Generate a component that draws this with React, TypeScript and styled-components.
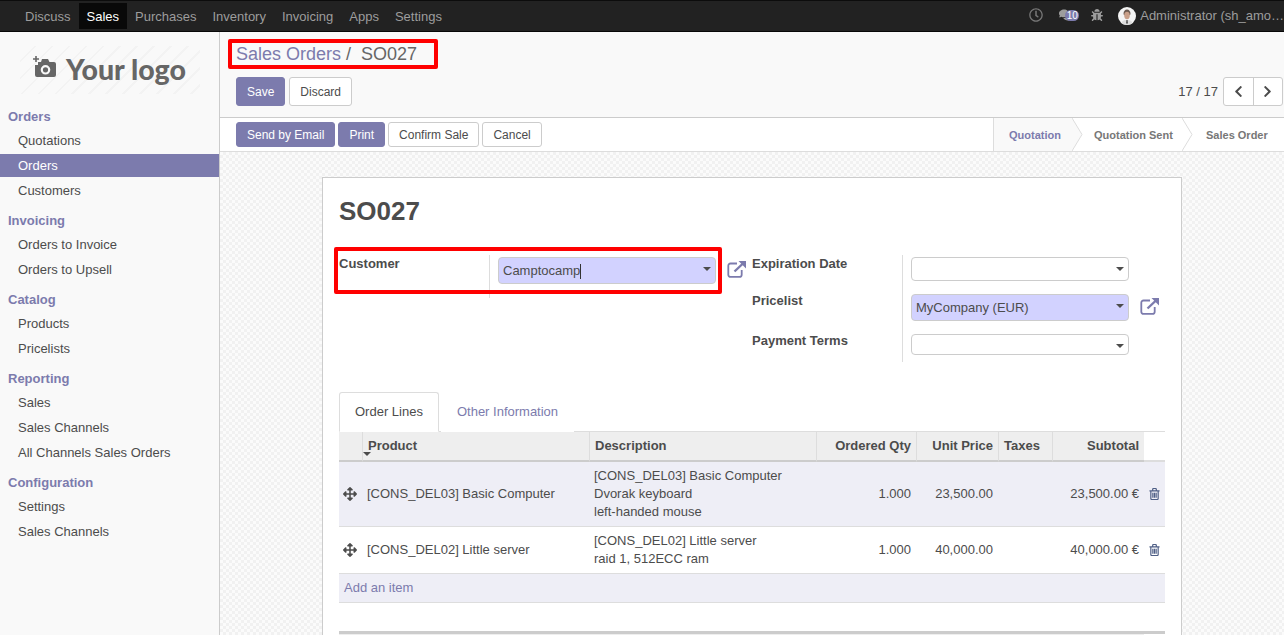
import React from "react";
import styled, { createGlobalStyle } from "styled-components";
import { FaRegClock, FaComments, FaBug, FaChevronLeft, FaChevronRight, FaArrowsAlt } from "react-icons/fa";

const Global = createGlobalStyle`
  html, body { margin: 0; padding: 0; height: 100%; overflow: hidden; }
  body { font-family: "Liberation Sans", Arial, sans-serif; font-size: 13px; color: #4c4c4c; background: #fff; }
  #root { height: 100%; }
  * { box-sizing: border-box; }
`;

const primary = "#7C7BAD";

const Page = styled.div`
  display: flex; flex-direction: column; width: 1284px; height: 635px; overflow: hidden;
`;
const Navbar = styled.header`
  flex: 0 0 32px; display: flex; align-items: center; justify-content: space-between;
  background: #222; border-top: 1px solid #0c0c0c; border-bottom: 1px solid #080808; padding: 0 0 0 17px;
`;
const NavGroup = styled.nav`display: flex; align-items: center; height: 100%;`;
const NavItem = styled.a<{ $active?: boolean }>`
  display: flex; align-items: center; height: 26px; padding: 0 8px;
  color: ${p => (p.$active ? "#fff" : "#9d9d9d")};
  background: ${p => (p.$active ? "#090909" : "transparent")};
`;
const NavRight = styled.div`display: flex; align-items: center; color: #9d9d9d; height: 100%;`;
const NavIconSlot = styled.span<{ $w: number; $ml: number; $dim?: boolean }>`
  display: inline-flex; align-items: center; justify-content: flex-start; position: relative;
  width: ${p => p.$w}px; height: 100%; margin-left: ${p => p.$ml}px; margin-top: -2px;
  color: ${p => (p.$dim ? "#777" : "#9d9d9d")};
`;
const Badge = styled.span`
  position: absolute; right: 0; top: 10px; height: 11px; width: 14px; border-radius: 6px; background: ${primary};
  color: #fff; font-size: 10px; line-height: 11px; text-align: center;
`;
const AvatarSlot = styled.svg`flex: none; margin-left: 15px;`;
const UserName = styled.span`white-space: nowrap; margin-left: 4px; margin-top: -1px;`;
const Body = styled.div`flex: 1; display: flex; min-height: 0;`;
const Sidebar = styled.aside`
  flex: 0 0 220px; background: #f9f9f9; border-right: 1px solid #ccc; overflow: hidden;
`;
const LogoWrap = styled.div`
  width: 180px; height: 48px; margin: 14px 0 13px 20px; display: flex; align-items: center; padding: 0 0 1px 13px; gap: 10px;
  background: repeating-linear-gradient(135deg, #f9f9f9 0 10px, #f3f3f3 10px 12px);
`;
const CameraIcon = styled.svg`flex: none; margin-top: -5px;`;
const LogoText = styled.span`
  font-family: Lato, sans-serif; font-weight: 900; font-size: 28.5px; color: #666; line-height: 1; white-space: nowrap;
`;
const MenuHeader = styled.div`
  height: 18px; line-height: 20px; margin: 9px 0 4px; padding-left: 8px; font-weight: 700; color: ${primary};
`;
const MenuItem = styled.a<{ $active?: boolean }>`
  display: block; height: 23px; line-height: 23px; margin-bottom: 2px; padding-left: 18px;
  color: ${p => (p.$active ? "#fff" : "#4c4c4c")};
  background: ${p => (p.$active ? primary : "transparent")};
`;
const Main = styled.main`flex: 1; display: flex; flex-direction: column; min-width: 0;`;
const ControlPanel = styled.div`
  flex: 0 0 86px; background: #f9f9f9; border-bottom: 1px solid #ccc; padding: 10px 1px 0 16px;
`;
const BreadcrumbLine = styled.div`
  position: relative; height: 25px; line-height: 24px; font-size: 18px; color: #666; white-space: pre;
`;
const Crumb = styled.a`color: ${primary};`;
const RedBox = styled.span<{ $t: number; $l: number; $w: number; $h: number }>`
  position: absolute; top: ${p => p.$t}px; left: ${p => p.$l}px; width: ${p => p.$w}px; height: ${p => p.$h}px;
  border: 4px solid #ff0000; border-radius: 2px; pointer-events: none;
`;
const PanelRow = styled.div`display: flex; align-items: center; justify-content: space-between; margin-top: 10px;`;
const Buttons = styled.div<{ $gap: number }>`display: flex; gap: ${p => p.$gap}px;`;
const Btn = styled.button<{ $primary?: boolean; $h: number }>`
  height: ${p => p.$h}px; padding: 0 10px; font: 12px "Liberation Sans", Arial, sans-serif; border-radius: 3px;
  border: 1px solid ${p => (p.$primary ? primary : "#ccc")};
  background: ${p => (p.$primary ? primary : "#fff")};
  color: ${p => (p.$primary ? "#fff" : "#4c4c4c")};
`;
const Pager = styled.div`display: flex; align-items: center; gap: 5px;`;
const PagerBtns = styled.div`display: flex; width: 60px; height: 29px; border: 1px solid #ccc; border-radius: 3px; background: #fff;`;
const PagerBtn = styled.span`
  flex: 1; display: flex; align-items: center; justify-content: center; color: #4c4c4c;
  & + & { border-left: 1px solid #ccc; }
`;
const ActionBar = styled.div`
  flex: 0 0 34px; background: #fff; border-bottom: 1px solid #ddd; display: flex; justify-content: space-between; padding-left: 16px; align-items: center;
`;
const Steps = styled.div`display: flex; height: 33px; align-self: flex-start; border-left: 1px solid #ddd;`;
const Step = styled.div<{ $active?: boolean; $w: number; $pl: number }>`
  position: relative; width: ${p => p.$w}px; display: flex; align-items: center; padding-left: ${p => p.$pl}px;
  font-size: 11px; font-weight: 700; white-space: nowrap; color: ${p => (p.$active ? primary : "#777")};
  background: ${p => (p.$active ? "#f9f9f9" : "#fff")};
`;
const StepArrow = styled.svg`position: absolute; right: 0; top: 0; width: 11px; height: 33px;`;
const Content = styled.div`
  flex: 1; min-height: 0; overflow: hidden; padding: 25px 102px 0;
  background: conic-gradient(#f1f1f1 25%, #fbfbfb 0 50%, #f1f1f1 0 75%, #fbfbfb 0) 0 0 / 6px 6px;
`;
const Sheet = styled.section`
  width: 860px; min-height: 600px; background: #fff; border: 1px solid #ccc; padding: 18px 16px 0;
`;
const Title = styled.h1`margin: 0 0 29px; font-size: 26px; line-height: 30px; font-weight: 700; color: #4c4c4c;`;
const Groups = styled.div`display: grid; grid-template-columns: 413px 413px;`;
const Group = styled.div`position: relative; align-self: start;`;
const FieldRow = styled.div`display: grid; grid-template-columns: 150px 1fr;`;
const Label = styled.label`font-weight: 700; line-height: 17px; color: #4c4c4c;`;
const Value = styled.div<{ $pb: number }>`
  border-left: 1px solid #ddd; padding: 2px 0 ${p => p.$pb}px 8px; display: flex; align-items: flex-start;
`;
const Select = styled.div<{ $h: number; $required?: boolean }>`
  position: relative; width: 218px; height: ${p => p.$h}px; padding-left: 4px; display: flex; align-items: center;
  border: 1px solid #ccc; border-radius: 4px; background: ${p => (p.$required ? "#D2D2FF" : "#fff")}; color: #4c4c4c;
  &::after {
    content: ""; position: absolute; right: 4px; top: 9px;
    border-left: 4px solid transparent; border-right: 4px solid transparent; border-top: 4px solid #4c4c4c;
  }
`;
const Caret = styled.span`display: inline-block; width: 1px; height: 15px; background: #333; margin-top: 1px;`;
const LinkIcon = styled.svg`width: 20px; height: 18px; margin: 3px 0 0 11px; flex: none;`;
const Tabs = styled.div`display: flex; margin-top: 30px; height: 40px; border-bottom: 1px solid #ddd;`;
const Tab = styled.a<{ $active?: boolean }>`
  display: flex; align-items: center; padding: 0 15px 2px; height: 40px; margin-right: 2px; border-radius: 3px 3px 0 0;
  border: 1px solid ${p => (p.$active ? "#ddd" : "transparent")}; border-bottom: 1px solid ${p => (p.$active ? "#fff" : "transparent")};
  color: ${p => (p.$active ? "#4c4c4c" : primary)}; background: #fff;
`;
const Table = styled.table`
  width: 826px; table-layout: fixed; border-collapse: separate; border-spacing: 0; color: #4c4c4c;
`;
const Th = styled.th<{ $right?: boolean; $last?: boolean }>`
  position: relative; height: 30px; padding: 0 5px; background: #eee; font-weight: 700;
  border-right: ${p => (p.$last ? "none" : "1px solid #ddd")}; border-bottom: 2px solid #ccc;
  text-align: ${p => (p.$right ? "right" : "left")};
  vertical-align: top; line-height: 28px;
`;
const ThBlank = styled.th`height: 30px; padding: 0; background: #fff; border-bottom: 2px solid #ddd;`;
const SortCaret = styled.span`
  position: absolute; left: 0; top: 20px;
  border-left: 4px solid transparent; border-right: 4px solid transparent; border-top: 4px solid #4c4c4c;
`;
const Tr = styled.tr<{ $stripe?: boolean }>`
  background: ${p => (p.$stripe ? "#EEEEF6" : "#fff")};
`;
const Td = styled.td<{ $right?: boolean }>`
  padding: 5px ${p => (p.$right ? 6 : 4)}px 5px 4px; line-height: 18px; border-bottom: 1px solid #ddd;
  text-align: ${p => (p.$right ? "right" : "left")};
  white-space: pre-line; vertical-align: middle;
`;
const SubtotalCell = styled(Td)`padding-right: 5px;`;
const HandleCell = styled(Td)`padding: 0 0 0 4px; color: #4c4c4c; line-height: 0;`;
const TrashCell = styled(Td)`padding: 0 0 0 5px; line-height: 0;`;
const TrashIcon = styled.svg`display: block;`;
const AddCell = styled.td`
  height: 29px; padding: 0 5px; line-height: 26px; border-bottom: 1px solid #ddd; color: ${primary};
`;
const SpacerCell = styled.td`height: 28px;`;
const FootCell = styled.td`height: 20px; border-top: 3px solid #ccc; background: #eee;`;
const FootBlank = styled.td`height: 20px; border-top: 3px solid #ccc; background: #fff;`;

const ExtLink = () => (
  <LinkIcon viewBox="0 0 20 18" fill="none" stroke={primary} strokeWidth="1.8">
    <path d="M10 3.500H3.500a2.200 2.200 0 0 0-2.200 2.200v9a2.200 2.200 0 0 0 2.200 2.200h9a2.200 2.200 0 0 0 2.200-2.200V10" />
    <path d="M7.500 11.500 17 2.500" strokeWidth="2.400" />
    <path d="M11.500 1h7.500v7.500z" fill={primary} stroke="none" />
  </LinkIcon>
);
const Trash = () => (
  <TrashIcon width="11" height="12" viewBox="0 0 12 13" fill="none" stroke="#4f5f86" strokeWidth="1.300">
    <path d="M0.500 3h11M2 3v8.500a1 1 0 0 0 1 1h6a1 1 0 0 0 1-1V3M4 3V1.500a1 1 0 0 1 1-1h2a1 1 0 0 1 1 1V3M4.200 5v5.500M6 5v5.500M7.800 5v5.500" />
  </TrashIcon>
);
const Camera = () => (
  <CameraIcon width="23" height="22" viewBox="0 0 23 22">
    <path d="M3 0v6M0 3h6" stroke="#666" strokeWidth="1.600" fill="none" />
    <path fillRule="evenodd" fill="#666" d="M9 3h6l1.500 3H21a2 2 0 0 1 2 2v11a2 2 0 0 1-2 2H4a2 2 0 0 1-2-2V9h3V6h3zM12.500 9a4.800 4.800 0 1 0 0 9.600 4.800 4.800 0 0 0 0-9.600zm0 2.200a2.600 2.600 0 1 1 0 5.200 2.600 2.600 0 0 1 0-5.200z" />
  </CameraIcon>
);
const Avatar = () => (
  <AvatarSlot width="18" height="18" viewBox="0 0 18 18">
    <circle cx="9" cy="9" r="9" fill="#f4f4f4" />
    <path d="M5.500 7c0-3 1.500-4.500 3.500-4.500S12.500 4 12.500 7l-.5 1H6z" fill="#6b5a50" />
    <ellipse cx="9" cy="8.500" rx="2.800" ry="3.700" fill="#c99f88" />
    <path d="M3.500 16.500c.5-3 2.500-3.500 5.500-3.500s5 .5 5.500 3.500A9 9 0 0 1 9 18a9 9 0 0 1-5.500-1.500z" fill="#ddd" />
    <path d="M8.400 13h1.200l.4 3.500H8z" fill="#555" />
  </AvatarSlot>
);

const menu: [string, string[]][] = [
  ["Orders", ["Quotations", "Orders", "Customers"]],
  ["Invoicing", ["Orders to Invoice", "Orders to Upsell"]],
  ["Catalog", ["Products", "Pricelists"]],
  ["Reporting", ["Sales", "Sales Channels", "All Channels Sales Orders"]],
  ["Configuration", ["Settings", "Sales Channels"]],
];
const lines = [
  { p: "[CONS_DEL03] Basic Computer", d: "[CONS_DEL03] Basic Computer\nDvorak keyboard\nleft-handed mouse", q: "1.000", u: "23,500.00", s: "23,500.00 €", stripe: true },
  { p: "[CONS_DEL02] Little server", d: "[CONS_DEL02] Little server\nraid 1, 512ECC ram", q: "1.000", u: "40,000.00", s: "40,000.00 €", stripe: false },
];
const steps = [
  { label: "Quotation", w: 89, pl: 15, arrow: true },
  { label: "Quotation Sent", w: 110, pl: 11, arrow: true },
  { label: "Sales Order", w: 91, pl: 13, arrow: false },
];
const colWidths = [24, 227, 227, 100, 82, 54, 91, 21];

export default function App() {
  return (
    <Page>
      <Global />
      <Navbar>
        <NavGroup>
          {["Discuss", "Sales", "Purchases", "Inventory", "Invoicing", "Apps", "Settings"].map(n => (
            <NavItem key={n} $active={n === "Sales"}>{n}</NavItem>
          ))}
        </NavGroup>
        <NavRight>
          <NavIconSlot $w={14} $ml={0} $dim><FaRegClock size={14} /></NavIconSlot>
          <NavIconSlot $w={20} $ml={16}><FaComments size={14} /><Badge>10</Badge></NavIconSlot>
          <NavIconSlot $w={12} $ml={12}><FaBug size={12} /></NavIconSlot>
          <Avatar />
          <UserName>Administrator (sh_amo…</UserName>
        </NavRight>
      </Navbar>
      <Body>
        <Sidebar>
          <LogoWrap>
            <Camera />
            <LogoText>Your logo</LogoText>
          </LogoWrap>
          {menu.map(([h, items]) => (
            <div key={h}>
              <MenuHeader>{h}</MenuHeader>
              {items.map((it, i) => (
                <MenuItem key={i} $active={h === "Orders" && it === "Orders"}>{it}</MenuItem>
              ))}
            </div>
          ))}
        </Sidebar>
        <Main>
          <ControlPanel>
            <BreadcrumbLine>
              <Crumb>Sales Orders</Crumb>{" /  SO027"}
              <RedBox $t={-3} $l={-8} $w={210} $h={30} />
            </BreadcrumbLine>
            <PanelRow>
              <Buttons $gap={4}>
                <Btn $primary $h={29}>Save</Btn>
                <Btn $h={29}>Discard</Btn>
              </Buttons>
              <Pager>
                <span>17 / 17</span>
                <PagerBtns>
                  <PagerBtn><FaChevronLeft size={13} /></PagerBtn>
                  <PagerBtn><FaChevronRight size={13} /></PagerBtn>
                </PagerBtns>
              </Pager>
            </PanelRow>
          </ControlPanel>
          <ActionBar>
            <Buttons $gap={3}>
              <Btn $primary $h={25}>Send by Email</Btn>
              <Btn $primary $h={25}>Print</Btn>
              <Btn $h={25}>Confirm Sale</Btn>
              <Btn $h={25}>Cancel</Btn>
            </Buttons>
            <Steps>
              {steps.map((s, i) => (
                <Step key={s.label} $active={i === 0} $w={s.w} $pl={s.pl}>
                  {s.label}
                  {s.arrow && (
                    <StepArrow viewBox="0 0 11 33">
                      <path d="M0 0 10 16.500 0 33H11V0z" fill="#fff" />
                      <path d="M0 0 10 16.500 0 33" fill="none" stroke="#ddd" />
                    </StepArrow>
                  )}
                </Step>
              ))}
            </Steps>
          </ActionBar>
          <Content>
            <Sheet>
              <Title>SO027</Title>
              <Groups>
                <Group>
                  <RedBox $t={-8} $l={-5} $w={388} $h={47} />
                  <FieldRow>
                    <Label>Customer</Label>
                    <Value $pb={14}>
                      <Select $h={27} $required>Camptocamp<Caret /></Select>
                      <ExtLink />
                    </Value>
                  </FieldRow>
                </Group>
                <Group>
                  <FieldRow>
                    <Label>Expiration Date</Label>
                    <Value $pb={11}><Select $h={24} /></Value>
                  </FieldRow>
                  <FieldRow>
                    <Label>Pricelist</Label>
                    <Value $pb={11}>
                      <Select $h={27} $required>MyCompany (EUR)</Select>
                      <ExtLink />
                    </Value>
                  </FieldRow>
                  <FieldRow>
                    <Label>Payment Terms</Label>
                    <Value $pb={7}><Select $h={21} /></Value>
                  </FieldRow>
                </Group>
              </Groups>
              <Tabs>
                <Tab $active>Order Lines</Tab>
                <Tab>Other Information</Tab>
              </Tabs>
              <Table>
                <colgroup>
                  {colWidths.map((w, i) => <col key={i} width={w} />)}
                </colgroup>
                <thead>
                  <tr>
                    <Th />
                    <Th>Product<SortCaret /></Th>
                    <Th>Description</Th>
                    <Th $right>Ordered Qty</Th>
                    <Th $right>Unit Price</Th>
                    <Th>Taxes</Th>
                    <Th $right $last>Subtotal</Th>
                    <ThBlank />
                  </tr>
                </thead>
                <tbody>
                  {lines.map(l => (
                    <Tr key={l.p} $stripe={l.stripe}>
                      <HandleCell><FaArrowsAlt size={14} /></HandleCell>
                      <Td>{l.p}</Td>
                      <Td>{l.d}</Td>
                      <Td $right>{l.q}</Td>
                      <Td $right>{l.u}</Td>
                      <Td />
                      <SubtotalCell $right>{l.s}</SubtotalCell>
                      <TrashCell><Trash /></TrashCell>
                    </Tr>
                  ))}
                  <Tr $stripe>
                    <AddCell colSpan={8}>Add an item</AddCell>
                  </Tr>
                  <tr><SpacerCell colSpan={8} /></tr>
                  <tr><FootCell colSpan={7} /><FootBlank /></tr>
                </tbody>
              </Table>
            </Sheet>
          </Content>
        </Main>
      </Body>
    </Page>
  );
}
